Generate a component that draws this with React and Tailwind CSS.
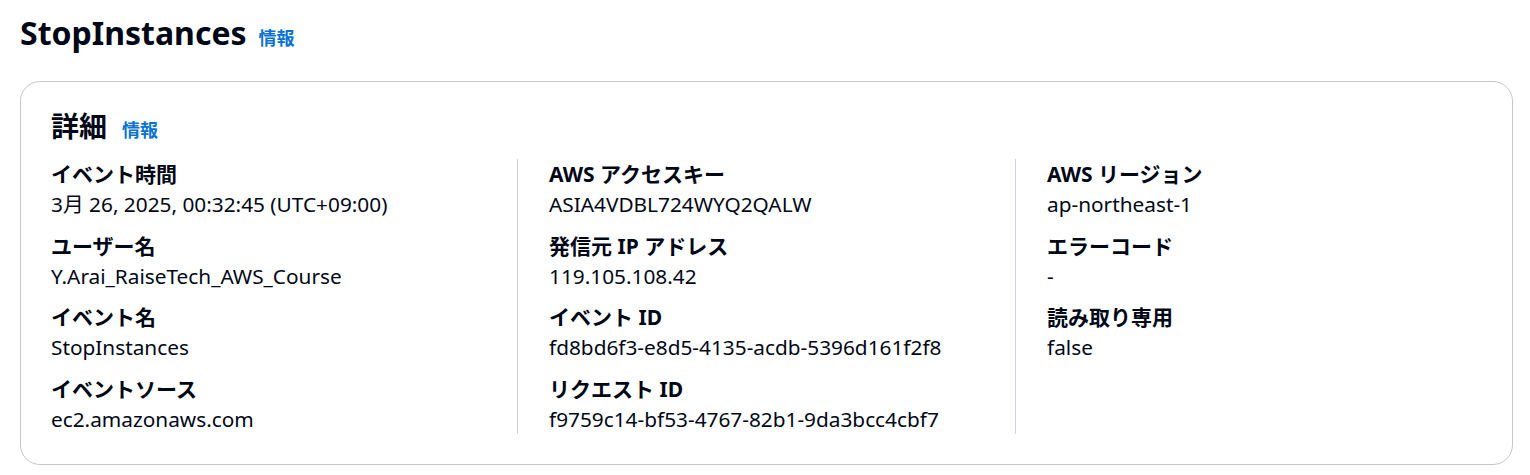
import React from 'react';

const FONT = { fontFamily: '"Noto Sans", "Noto Sans CJK JP", sans-serif' };

const COLUMNS = [
  [
    ['イベント時間', '3月 26, 2025, 00:32:45 (UTC+09:00)'],
    ['ユーザー名', 'Y.Arai_RaiseTech_AWS_Course'],
    ['イベント名', 'StopInstances'],
    ['イベントソース', 'ec2.amazonaws.com'],
  ],
  [
    ['AWS アクセスキー', 'ASIA4VDBL724WYQ2QALW'],
    ['発信元 IP アドレス', '119.105.108.42'],
    ['イベント ID', 'fd8bd6f3-e8d5-4135-acdb-5396d161f2f8'],
    ['リクエスト ID', 'f9759c14-bf53-4767-82b1-9da3bcc4cbf7'],
  ],
  [
    ['AWS リージョン', 'ap-northeast-1'],
    ['エラーコード', '-'],
    ['読み取り専用', 'false'],
  ],
];

function Field({ label, value }) {
  return (
    <div>
      <div className="font-bold text-[21px] leading-[30px]">{label}</div>
      <div className="text-[20.8px] leading-[30px]">{value}</div>
    </div>
  );
}

export default function App() {
  return (
    <div className="bg-white text-[#000716] w-[1530px] h-[475px] overflow-hidden" style={FONT}>
      <div className="flex items-baseline gap-3 px-5 pt-[12px] h-[81px]">
        <h1 className="text-[32px] leading-[42px] font-bold">StopInstances</h1>
        <a className="text-[18px] font-bold text-[#0972d3]">情報</a>
      </div>

      <div className="ml-5 mr-[17px] border border-[#c6c6cd] rounded-[20px] pl-[30px] pr-[30px] pt-[27px] pb-[30px]">
        <div className="flex items-baseline gap-[15px] mb-[15px]">
          <h2 className="text-[28px] leading-[34px] font-bold">詳細</h2>
          <a className="text-[18px] font-bold text-[#0972d3]">情報</a>
        </div>

        <div className="grid grid-cols-[466px_498px_1fr]">
          {COLUMNS.map((col, i) => (
            <div key={i} className={i > 0 ? 'border-l border-[#d1d5db] pl-[31px] flex flex-col gap-[11.5px]' : 'flex flex-col gap-[11.5px]'}>
              {col.map(([l, v]) => (
                <Field key={l} label={l} value={v} />
              ))}
            </div>
          ))}
        </div>
      </div>
    </div>
  );
}
